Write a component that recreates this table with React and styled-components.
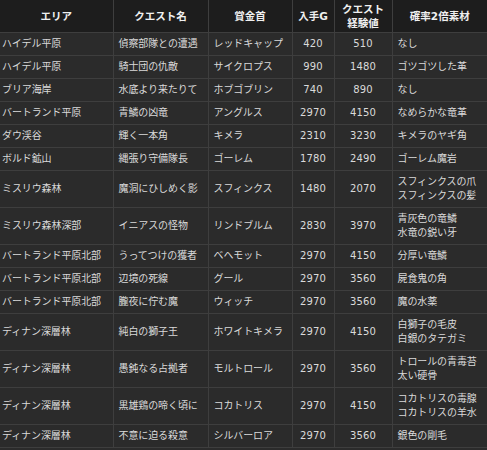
// React
import React from 'react';

// Styles
import styled, { createGlobalStyle } from 'styled-components';

const GlobalStyle = createGlobalStyle`
  html, body {
    margin: 0;
    padding: 0;
    background: #2b2b2b;
  }
`

const Table = styled.table`
  width: 487px;
  border-collapse: collapse;
  table-layout: fixed;
  background: #2b2b2b;
  color: #dadada;
  font-family: "DejaVu Sans", "Noto Sans CJK JP", sans-serif;
  font-size: 10px;
  line-height: 14px;
`

const HeadCell = styled.th`
  background: #1d1d1d;
  color: #f0f0f0;
  font-weight: bold;
  font-size: 10.5px;
  line-height: 14px;
  padding: 2px 2px;
  height: 28px;
  text-align: center;
  border-left: 1px solid #3e3e3e;
  border-bottom: 1px solid #3e3e3e;

  &:first-child {
    border-left: none;
  }
`

const Cell = styled.td`
  padding: ${({ $first }) => ($first ? '4px 2px' : '4px 5px')};
  text-align: ${({ $num }) => ($num ? 'center' : 'left')};
  border-left: ${({ $first }) => ($first ? 'none' : '1px solid #3e3e3e')};
  border-bottom: 1px solid #3e3e3e;
  white-space: nowrap;
  overflow: hidden;
  letter-spacing: ${({ $num }) => ($num ? '0.2px' : '-0.1px')};
`

const columns = [
  { label: 'エリア', width: 113 },
  { label: 'クエスト名', width: 95 },
  { label: '賞金首', width: 84 },
  { label: '入手G', width: 42 },
  { label: ['クエスト', '経験値'], width: 58 },
  { label: '確率2倍素材', width: 95 },
];

const rows = [
  ['ハイデル平原', '偵察部隊との遭遇', 'レッドキャップ', '420', '510', ['なし']],
  ['ハイデル平原', '騎士団の仇敵', 'サイクロプス', '990', '1480', ['ゴツゴツした革']],
  ['ブリア海岸', '水底より来たりて', 'ホブゴブリン', '740', '890', ['なし']],
  ['バートランド平原', '青鱗の凶竜', 'アングルス', '2970', '4150', ['なめらかな竜革']],
  ['ダウ渓谷', '輝く一本角', 'キメラ', '2310', '3230', ['キメラのヤギ角']],
  ['ボルド鉱山', '縄張り守備隊長', 'ゴーレム', '1780', '2490', ['ゴーレム魔岩']],
  ['ミスリウ森林', '魔洞にひしめく影', 'スフィンクス', '1480', '2070', ['スフィンクスの爪', 'スフィンクスの髪']],
  ['ミスリウ森林深部', 'イニアスの怪物', 'リンドブルム', '2830', '3970', ['青灰色の竜鱗', '水竜の鋭い牙']],
  ['バートランド平原北部', 'うってつけの獲者', 'ベヘモット', '2970', '4150', ['分厚い竜鱗']],
  ['バートランド平原北部', '辺境の死線', 'グール', '2970', '3560', ['屍食鬼の角']],
  ['バートランド平原北部', '朧夜に佇む魔', 'ウィッチ', '2970', '3560', ['魔の水薬']],
  ['ディナン深層林', '純白の獅子王', 'ホワイトキメラ', '2970', '4150', ['白獅子の毛皮', '白銀のタテガミ']],
  ['ディナン深層林', '愚鈍なる占拠者', 'モルトロール', '2970', '3560', ['トロールの青毒苔', '太い硬骨']],
  ['ディナン深層林', '黒雄鶏の啼く頃に', 'コカトリス', '2970', '4150', ['コカトリスの毒腺', 'コカトリスの羊水']],
  ['ディナン深層林', '不意に迫る殺意', 'シルバーロア', '2970', '3560', ['銀色の剛毛']],
];

const App = () => {
  return (
    <>
      <GlobalStyle />
      <Table>
        <colgroup>
          {columns.map((col, i) => (
            <col key={i} style={{ width: col.width }} />
          ))}
        </colgroup>
        <thead>
          <tr>
            {columns.map((col, i) => (
              <HeadCell key={i}>
                {Array.isArray(col.label)
                  ? col.label.map((line, j) => <div key={j}>{line}</div>)
                  : col.label}
              </HeadCell>
            ))}
          </tr>
        </thead>
        <tbody>
          {rows.map((row, i) => (
            <tr key={i}>
              <Cell $first>{row[0]}</Cell>
              <Cell>{row[1]}</Cell>
              <Cell>{row[2]}</Cell>
              <Cell $num>{row[3]}</Cell>
              <Cell $num>{row[4]}</Cell>
              <Cell>
                {row[5].map((line, j) => (
                  <div key={j}>{line}</div>
                ))}
              </Cell>
            </tr>
          ))}
        </tbody>
      </Table>
    </>
  );
};

export default App;
